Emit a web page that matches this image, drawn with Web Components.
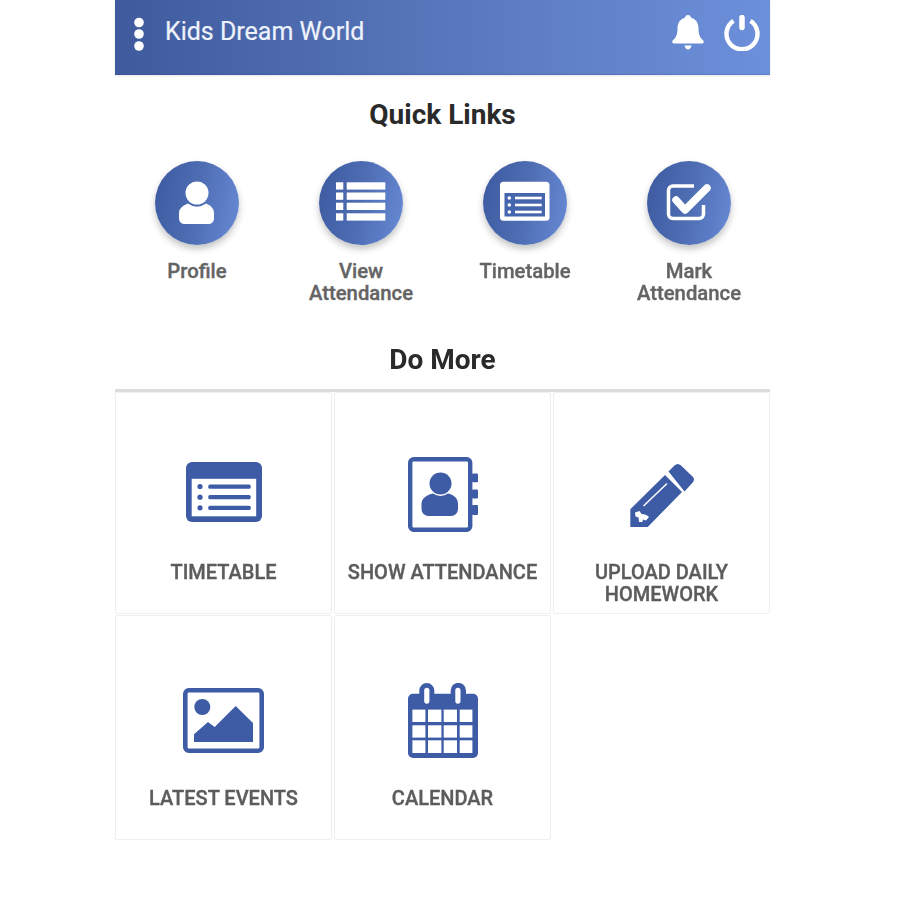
<!DOCTYPE html>
<html lang="en">
<head>
<meta charset="utf-8">
<title>Kids Dream World</title>
<style>
  html, body { margin: 0; padding: 0; background: #fff; }
  body { font-family: Roboto, "Liberation Sans", sans-serif; }
</style>
</head>
<body>
<kd-app>
  <kd-header slot="header">Kids Dream World</kd-header>

  <kd-title>Quick Links</kd-title>
  <kd-quick-row>
    <kd-quick-link icon="person">Profile</kd-quick-link>
    <kd-quick-link icon="list">View<br>Attendance</kd-quick-link>
    <kd-quick-link icon="table">Timetable</kd-quick-link>
    <kd-quick-link icon="check">Mark<br>Attendance</kd-quick-link>
  </kd-quick-row>

  <kd-title class="more">Do More</kd-title>
  <kd-tiles>
    <kd-tile icon="timetable">TIMETABLE</kd-tile>
    <kd-tile icon="book">SHOW ATTENDANCE</kd-tile>
    <kd-tile icon="pencil">UPLOAD DAILY<br>HOMEWORK</kd-tile>
    <kd-tile icon="image">LATEST EVENTS</kd-tile>
    <kd-tile icon="calendar">CALENDAR</kd-tile>
  </kd-tiles>
</kd-app>

<script>
// all icon drawings, measured from the reference
const ICONS = {
  dots: `<svg width="12" height="36" viewBox="0 0 12 36" fill="#fff"><circle cx="6" cy="5.500" r="4.800"/><circle cx="6" cy="17" r="4.800"/><circle cx="6" cy="29" r="4.800"/></svg>`,
  bell: `<svg width="32" height="36" viewBox="0 0 32 36" fill="#fff"><path d="M16 0c1.700 0 3 1.200 3 2.800 5 1.300 7.500 5.500 7.500 10.500 0 6 1.500 9.500 5 12.500.5.600.4 2.700-1 2.700H1.500c-1.400 0-1.500-2.100-1-2.700 3.500-3 5-6.500 5-12.500 0-5 2.500-9.200 7.500-10.500C13 1.200 14.300 0 16 0z"/><path d="M12.500 30.500h7c-.5 2.500-2 4-3.500 4s-3-1.500-3.500-4z"/></svg>`,
  power: `<svg width="36" height="36" viewBox="0 0 36 36" fill="none" stroke="#fff"><path stroke-width="4.400" d="M9.500 5.800A15.500 15.500 0 1 0 26.500 5.800"/><path stroke-width="5.500" stroke-linecap="round" d="M18 2.500V12.500"/></svg>`,

  person: `<svg width="84" height="84" viewBox="0 0 84 84" fill="#fff"><circle cx="42" cy="32" r="11.500"/><path d="M33 42.500A14.500 14.500 0 0 0 51 42.500C55 44 59 47 59 52V57.500A5.500 5.500 0 0 1 53.500 63H29.500A5.500 5.500 0 0 1 24 57.500V52C24 47 29 44 33 42.500Z"/></svg>`,
  list: `<svg width="84" height="84" viewBox="0 0 84 84" fill="#fff"><rect x="17" y="21.300" width="7.300" height="7.300"/><rect x="27.700" y="21.300" width="38.600" height="7.300"/><rect x="17" y="31.500" width="7.300" height="7.300"/><rect x="27.700" y="31.500" width="38.600" height="7.300"/><rect x="17" y="41.700" width="7.300" height="7.300"/><rect x="27.700" y="41.700" width="38.600" height="7.300"/><rect x="17" y="52.300" width="7.300" height="7.300"/><rect x="27.700" y="52.300" width="38.600" height="7.300"/></svg>`,
  table: `<svg width="84" height="84" viewBox="0 0 84 84"><rect x="17" y="20.700" width="49.500" height="39" rx="3.500" fill="#fff"/><rect x="21.500" y="32" width="40.500" height="23.500" fill="#4565ad"/><g fill="#fff"><circle cx="26.300" cy="37" r="1.800"/><circle cx="26.300" cy="44" r="1.800"/><circle cx="26.300" cy="51" r="1.800"/><rect x="32" y="35.700" width="26.700" height="2.600"/><rect x="32" y="42.700" width="26.700" height="2.600"/><rect x="32" y="49.700" width="26.700" height="2.600"/></g></svg>`,
  check: `<svg width="84" height="84" viewBox="0 0 84 84" fill="none" stroke="#fff"><path stroke-width="3.500" d="M47 25H26A4.500 4.500 0 0 0 21.500 29.500V53A4.500 4.500 0 0 0 26 57.500H52A4.500 4.500 0 0 0 56.500 53V44"/><path stroke-width="7.500" stroke-linejoin="round" stroke-linecap="round" d="M29 39L38 49L60 27"/></svg>`,

  timetable: `<svg style="margin-bottom:5px" width="76" height="60" viewBox="0 0 76 60"><rect width="76" height="60" rx="6" fill="#3e5ca6"/><rect x="5.700" y="16.800" width="64.500" height="37.500" fill="#fff"/><g fill="#3e5ca6"><circle cx="14" cy="24.500" r="2.600"/><circle cx="14" cy="35.200" r="2.600"/><circle cx="14" cy="45.800" r="2.600"/><rect x="22.300" y="22.400" width="42.400" height="4.300" rx="1.500"/><rect x="22.300" y="33" width="42.400" height="4.300" rx="1.500"/><rect x="22.300" y="43.700" width="42.400" height="4.300" rx="1.500"/></g></svg>`,
  book: `<svg width="70" height="75" viewBox="0 0 70 75" fill="#3e5ca6"><rect x="2.200" y="2.200" width="60" height="70.600" rx="3.500" fill="none" stroke="#3e5ca6" stroke-width="4.400"/><rect x="64" y="16.500" width="6" height="8.800" rx="1"/><rect x="64" y="32.500" width="6" height="9" rx="1"/><rect x="64" y="48" width="6" height="10" rx="1"/><circle cx="32.500" cy="26.500" r="11"/><path d="M25 36.500A13 13 0 0 0 40 36.500C45.500 37.500 50 41 50 47V52A7 7 0 0 1 43 59H20.500A7 7 0 0 1 13.500 52V47C13.500 41 19.500 37.500 25 36.500Z"/></svg>`,
  pencil: `<svg width="66" height="66" viewBox="0 0 66 66" fill="#3e5ca6"><path d="M39.500 9.500L45.500 3.500Q48.700.5 52 3.500L63.500 14.500Q66.500 17.500 63.500 20.800L55.500 29.500Z"/><path d="M36 13L53 30L18.700 65H1.300V47.300Z"/><path d="M14.500 44L38 21.500" stroke="#fff" stroke-width="1.500" fill="none"/><path d="M6 50.500L10.500 49L12.500 52C15 52 18.500 53 20 55L17 58.500L14 57.500L13.500 60H10L9.500 55.500L6.500 54.500Z" fill="#fff"/></svg>`,
  image: `<svg width="81" height="65" viewBox="0 0 81 65" fill="#3e5ca6"><rect x="2.300" y="2.300" width="76.400" height="60.400" rx="3.500" fill="none" stroke="#3e5ca6" stroke-width="4.600"/><circle cx="19.300" cy="19" r="8"/><path d="M11 46.300L25 34L31.700 39L52.700 18L70 35V54H11Z"/></svg>`,
  calendar: `<svg width="70" height="75" viewBox="0 0 70 75"><path fill="#3e5ca6" d="M11.300 10.700V7.500A7.500 7.500 0 0 1 26.300 7.500V10.700H42.700V7.500A7.600 7.600 0 0 1 58 7.500V10.700H65A5 5 0 0 1 70 15.700V70A5 5 0 0 1 65 75H5A5 5 0 0 1 0 70V15.700A5 5 0 0 1 5 10.700Z"/><g fill="#fff"><rect x="16.200" y="4.700" width="5.200" height="16" rx="2.600"/><rect x="47.300" y="4.700" width="5.200" height="16" rx="2.600"/><rect x="4.400" y="26.600" width="13" height="12.400"/><rect x="20" y="26.600" width="13.400" height="12.400"/><rect x="35.700" y="26.600" width="13.300" height="12.400"/><rect x="51.700" y="26.600" width="12.700" height="12.400"/><rect x="4.400" y="42.300" width="13" height="12.300"/><rect x="20" y="42.300" width="13.400" height="12.300"/><rect x="35.700" y="42.300" width="13.300" height="12.300"/><rect x="51.700" y="42.300" width="12.700" height="12.300"/><rect x="4.400" y="57.300" width="13" height="12.700"/><rect x="20" y="57.300" width="13.400" height="12.700"/><rect x="35.700" y="57.300" width="13.300" height="12.700"/><rect x="51.700" y="57.300" width="12.700" height="12.700"/></g></svg>`
};

class KdApp extends HTMLElement {
  connectedCallback() {
    this.attachShadow({ mode: 'open' });
    this.shadowRoot.innerHTML = `
      <style>
        /* the reference is a soft upscaled capture */
        :host { display: block; width: 655px; margin-left: 115px; background: #fff; filter: blur(.4px); }
        .body { display: flex; flex-direction: column; }
      </style>
      <slot name="header"></slot>
      <div class="body"><slot></slot></div>
    `;
  }
}
customElements.define('kd-app', KdApp);

class KdHeader extends HTMLElement {
  connectedCallback() {
    this.attachShadow({ mode: 'open' });
    this.shadowRoot.innerHTML = `
      <style>
        :host {
          display: flex;
          align-items: flex-start;
          height: 75px;
          box-sizing: border-box;
          padding: 14px 10px 0 18px;
          color: #eef2fb;
          background: linear-gradient(90deg, #3f5b9e 0%, #5876bb 50%, #6d90db 100%);
          box-shadow: inset 0 -1px 1px rgba(40, 60, 120, .2), 0 1px 2px rgba(0, 0, 0, .1);
        }
        .dots { width: 12px; height: 36px; margin-right: 20px; margin-top: 3px; flex: none; }
        .title { font: 400 25px/36px Roboto, sans-serif; flex: 1; -webkit-text-stroke: .2px; }
        .bell { width: 32px; height: 36px; margin-top: 1px; margin-right: 20px; }
        .power { width: 36px; height: 36px; margin-top: 1px; }
        svg { display: block; }
      </style>
      <div class="dots">${ICONS.dots}</div>
      <div class="title"><slot></slot></div>
      <div class="bell">${ICONS.bell}</div>
      <div class="power">${ICONS.power}</div>
    `;
  }
}
customElements.define('kd-header', KdHeader);

class KdTitle extends HTMLElement {
  connectedCallback() {
    this.attachShadow({ mode: 'open' });
    this.shadowRoot.innerHTML = `
      <style>
        :host {
          display: block;
          text-align: center;
          font: 700 28px/32px Roboto, sans-serif;
          color: #2a2a2a;
          padding-top: 24px;
        }
        :host(.more) { padding-top: 40px; padding-bottom: 13px; }
      </style>
      <slot></slot>
    `;
  }
}
customElements.define('kd-title', KdTitle);

class KdQuickRow extends HTMLElement {
  connectedCallback() {
    this.attachShadow({ mode: 'open' });
    this.shadowRoot.innerHTML = `
      <style>
        :host { display: grid; grid-template-columns: repeat(4, 164px); padding-top: 30px; }
      </style>
      <slot></slot>
    `;
  }
}
customElements.define('kd-quick-row', KdQuickRow);

class KdQuickLink extends HTMLElement {
  connectedCallback() {
    this.attachShadow({ mode: 'open' });
    this.shadowRoot.innerHTML = `
      <style>
        :host {
          display: flex;
          flex-direction: column;
          align-items: center;
          text-align: center;
          font: 500 20.300px/22px Roboto, sans-serif;
          color: #646464;
          -webkit-text-stroke: .35px;
        }
        .circle {
          width: 84px;
          height: 84px;
          border-radius: 50%;
          background: linear-gradient(100deg, #3d5a9f 0%, #4e6db3 50%, #688bd6 100%);
          box-shadow: 0 4px 7px rgba(0, 0, 0, .24);
          margin-bottom: 15px;
        }
        svg { display: block; }
        .label { min-height: 44px; }
      </style>
      <div class="circle">${ICONS[this.getAttribute('icon')]}</div>
      <div class="label"><slot></slot></div>
    `;
  }
}
customElements.define('kd-quick-link', KdQuickLink);

class KdTiles extends HTMLElement {
  connectedCallback() {
    this.attachShadow({ mode: 'open' });
    this.shadowRoot.innerHTML = `
      <style>
        :host {
          display: grid;
          grid-template-columns: repeat(3, 217px);
          grid-template-rows: 222px 225px;
          column-gap: 2px;
          row-gap: 1px;
          border-top: 3px solid #dcdcdc;
        }
      </style>
      <slot></slot>
    `;
  }
}
customElements.define('kd-tiles', KdTiles);

class KdTile extends HTMLElement {
  connectedCallback() {
    this.attachShadow({ mode: 'open' });
    this.shadowRoot.innerHTML = `
      <style>
        :host {
          display: flex;
          flex-direction: column;
          justify-content: flex-end;
          align-items: center;
          box-sizing: border-box;
          padding-bottom: 8px;
          border: 1px solid #efefef;
          border-radius: 2px;
          text-align: center;
          font: 500 20px/22px Roboto, sans-serif;
          color: #5c5c5c;
          -webkit-text-stroke: .35px;
        }
        .icon { height: 75px; display: flex; align-items: center; justify-content: center; margin-bottom: 29px; }
        .label { height: 44px; }
        svg { display: block; }
      </style>
      <div class="icon">${ICONS[this.getAttribute('icon')]}</div>
      <div class="label"><slot></slot></div>
    `;
  }
}
customElements.define('kd-tile', KdTile);
</script>
</body>
</html>
